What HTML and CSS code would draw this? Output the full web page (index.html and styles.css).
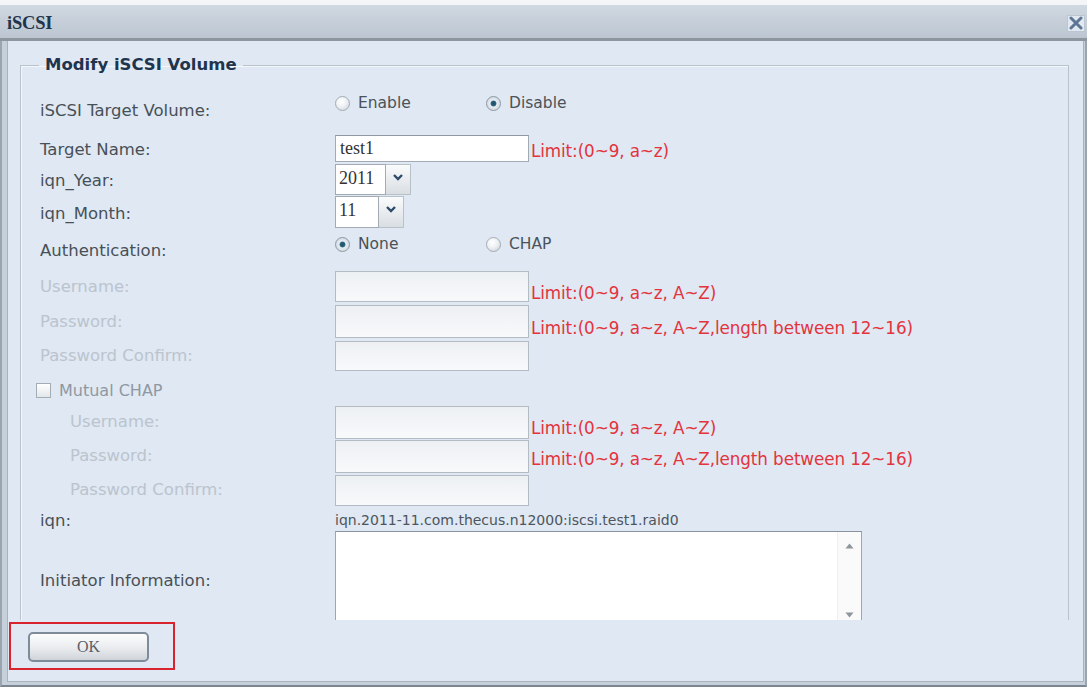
FILE: index.html
```html
<!DOCTYPE html>
<html>
<head>
<meta charset="utf-8">
<title>iSCSI</title>
<link rel="stylesheet" href="styles.css">
</head>
<body>
<div class="dialog">
  <div class="titlebar">
    <span class="title">iSCSI</span>
    <span class="close"><svg width="14" height="14" viewBox="0 0 14 14"><path d="M2 2 L12 12 M12 2 L2 12" stroke="#5d7695" stroke-width="3" stroke-linecap="round"/></svg></span>
  </div>
  <div class="panel">
    <div class="scroll">
      <fieldset class="group">
        <legend>Modify iSCSI Volume</legend>

        <div class="row r-a top">
          <span class="label low">iSCSI Target Volume:</span>
          <div class="radios">
            <span class="radio-item"><span class="radio"></span>Enable</span>
            <span class="radio-item"><span class="radio on"></span>Disable</span>
          </div>
        </div>

        <div class="row r-b">
          <span class="label down">Target Name:</span>
          <input class="field h27" type="text" value="test1">
          <span class="limit">Limit:(0~9, a~z)</span>
        </div>

        <div class="row r-c">
          <span class="label down">iqn_Year:</span>
          <div class="select s-year"><span class="sel-val">2011</span><span class="sel-btn"><svg width="12" height="8" viewBox="0 0 12 8"><path d="M2 2 L6 6 L10 2" fill="none" stroke="#2e4a6b" stroke-width="2.4"/></svg></span></div>
        </div>

        <div class="row r-d">
          <span class="label down">iqn_Month:</span>
          <div class="select s-month"><span class="sel-val">11</span><span class="sel-btn"><svg width="12" height="8" viewBox="0 0 12 8"><path d="M2 2 L6 6 L10 2" fill="none" stroke="#2e4a6b" stroke-width="2.4"/></svg></span></div>
        </div>

        <div class="row r-e top">
          <span class="label low">Authentication:</span>
          <div class="radios auth">
            <span class="radio-item"><span class="radio on"></span>None</span>
            <span class="radio-item"><span class="radio"></span>CHAP</span>
          </div>
        </div>

        <div class="row r-f">
          <span class="label off">Username:</span>
          <input class="field h31" type="text" disabled>
          <span class="limit low">Limit:(0~9, a~z, A~Z)</span>
        </div>

        <div class="row r-g">
          <span class="label off">Password:</span>
          <input class="field h33" type="password" disabled>
          <span class="limit low">Limit:(0~9, a~z, A~Z,length between 12~16)</span>
        </div>

        <div class="row r-h">
          <span class="label off">Password Confirm:</span>
          <input class="field h30" type="password" disabled>
        </div>

        <div class="row r-i">
          <span class="check-label"><span class="checkbox"></span>Mutual CHAP</span>
        </div>

        <div class="row r-j">
          <span class="label off sub">Username:</span>
          <input class="field h33" type="text" disabled>
          <span class="limit low">Limit:(0~9, a~z, A~Z)</span>
        </div>

        <div class="row r-k">
          <span class="label off sub">Password:</span>
          <input class="field h33" type="password" disabled>
          <span class="limit">Limit:(0~9, a~z, A~Z,length between 12~16)</span>
        </div>

        <div class="row r-l">
          <span class="label off sub">Password Confirm:</span>
          <input class="field h31" type="password" disabled>
        </div>

        <div class="row r-m">
          <span class="label down">iqn:</span>
          <span class="iqn">iqn.2011-11.com.thecus.n12000:iscsi.test1.raid0</span>
        </div>

        <div class="row r-n">
          <span class="label">Initiator Information:</span>
          <div class="textarea">
            <div class="ta-body"></div>
            <div class="ta-bar">
              <svg width="9" height="6" viewBox="0 0 9 6"><path d="M0.5 5.5 L4.5 0.5 L8.5 5.5 Z" fill="#8e959c"/></svg>
              <svg width="9" height="6" viewBox="0 0 9 6"><path d="M0.5 0.5 L4.5 5.5 L8.5 0.5 Z" fill="#8e959c"/></svg>
            </div>
          </div>
        </div>

        <div class="row r-o"></div>
      </fieldset>
    </div>
    <div class="footer">
      <div class="highlight">
        <button class="ok" type="button">OK</button>
      </div>
    </div>
  </div>
</div>
</body>
</html>
```

FILE: styles.css
```css
html, body {
  margin: 0;
  padding: 0;
}

body {
  background: #f3f5f7;
  font-family: "DejaVu Sans", Verdana, sans-serif;
  width: 1087px;
  height: 687px;
  overflow: hidden;
}

.dialog {
  margin-top: 5px;
  height: 682px;
  box-sizing: border-box;
  display: flex;
  flex-direction: column;
  background: #c6d0da;
  border-left: 2px solid #9ba5af;
  border-right: 2px solid #9ba5af;
  border-bottom: 2px solid #7c868f;
}

.titlebar {
  height: 33px;
  flex: none;
  display: flex;
  align-items: center;
  justify-content: space-between;
  padding: 0 0 0 7px;
  margin: 0 -2px;
  background: linear-gradient(#d0d8e1, #bcc6d1);
  border-bottom: 3px solid #8d969f;
}

.title {
  font-family: "Liberation Serif", "Times New Roman", serif;
  font-weight: bold;
  font-size: 18.5px;
  color: #22344b;
  letter-spacing: -0.2px;
  padding-top: 4px;
}

.close {
  width: 18px;
  height: 17px;
  margin-right: 2px;
  margin-top: 3px;
  display: flex;
  align-items: center;
  justify-content: center;
  background: #e2e8ef;
  border: 1px solid #bcc6d1;
  box-sizing: border-box;
}

.panel {
  flex: 1;
  margin: 0 1px 3px 5px;
  background: #dfe8f3;
  border: 1px solid #a8b2bc;
  border-top: none;
  display: flex;
  flex-direction: column;
}

.scroll {
  height: 579px;
  flex: none;
  overflow: hidden;
  padding: 15px 14px 0 12px;
  box-sizing: border-box;
}

.group {
  margin: 0;
  padding: 14px 10px 0 19px;
  border: 1px solid #b8c3ce;
  box-shadow: inset 1px 1px 0 #f4f7fa;
  min-width: 0;
}

.group legend {
  padding: 0 6px;
  margin-left: -1px;
  font-weight: bold;
  font-size: 16.5px;
  line-height: 18px;
  color: #1f344d;
}

.row {
  display: flex;
  align-items: center;
}

.row.top {
  align-items: flex-start;
}

.label {
  width: 295px;
  flex: none;
  font-size: 16.5px;
  line-height: 18px;
  color: #485057;
}

.label.low {
  padding-top: 14px;
}

.label.down {
  padding-top: 4px;
}

.label.off {
  color: #bbc4ce;
}

.label.sub {
  padding-left: 30px;
  width: 265px;
}

.r-a { height: 45px; }
.r-b { height: 30px; }
.r-c { height: 32px; }
.r-d { height: 33px; }
.r-e { height: 41px; }
.r-f { height: 35px; }
.r-g { height: 35px; }
.r-h { height: 34px; }
.r-i { height: 32px; }
.r-j { height: 34px; }
.r-k { height: 34px; }
.r-l { height: 34px; }
.r-m { height: 24px; }
.r-n { height: 100px; }
.r-o { height: 30px; }

.radios {
  display: flex;
  padding-top: 6px;
  font-size: 15.5px;
  line-height: 18px;
  color: #4b5259;
}

.radios.auth {
  padding-top: 7px;
}

.radio-item {
  width: 151px;
  display: flex;
  align-items: center;
  gap: 8px;
}

.radio {
  width: 15px;
  height: 15px;
  box-sizing: border-box;
  border-radius: 50%;
  border: 1px solid #a3abb3;
  background: radial-gradient(circle at 40% 35%, #ffffff 0%, #eef1f4 45%, #c9cfd5 100%);
  flex: none;
}

.radio.on {
  border-color: #8d99a5;
  background: radial-gradient(circle at 50% 50%, #1f4d63 0%, #2d6680 28%, #e8eef3 36%, #c4ccd4 100%);
}

.field {
  width: 194px;
  box-sizing: border-box;
  margin: 0;
  padding: 0 4px;
  border: 1px solid #a2abb4;
  border-top-color: #8f98a1;
  background: #ffffff;
  font-family: "Liberation Serif", "Times New Roman", serif;
  font-size: 18px;
  color: #333;
  outline: none;
  flex: none;
}

.field:disabled {
  background: linear-gradient(#edf0f3, #f8f9fb);
  border-color: #b3bbc3;
}

.h27 { height: 27px; }
.h30 { height: 30px; }
.h31 { height: 31px; }
.h33 { height: 33px; }

.limit {
  color: #e3343c;
  font-size: 16.8px;
  letter-spacing: -0.1px;
  margin-left: 2px;
  padding-top: 6px;
  white-space: nowrap;
}

.limit.low {
  padding-top: 12px;
}

.select {
  display: flex;
  flex: none;
}

.sel-val {
  box-sizing: border-box;
  border: 1px solid #a2abb4;
  background: #fff;
  font-family: "Liberation Serif", "Times New Roman", serif;
  font-size: 18px;
  color: #333;
  padding: 3px 0 0 3px;
}

.sel-btn {
  box-sizing: border-box;
  width: 25px;
  border: 1px solid #b8c0c8;
  border-left: none;
  background: linear-gradient(#fafbfc, #d9dee3);
  display: flex;
  justify-content: center;
  padding-top: 8px;
}

.s-year .sel-val { width: 51px; height: 31px; }
.s-year .sel-btn { height: 31px; }
.s-month .sel-val { width: 44px; height: 32px; }
.s-month .sel-btn { height: 32px; }

.check-label {
  display: flex;
  align-items: center;
  gap: 8px;
  margin-left: -4px;
  padding-top: 3px;
  font-size: 16px;
  color: #8f98a2;
}

.checkbox {
  width: 15px;
  height: 15px;
  box-sizing: border-box;
  border: 1px solid #a4acb4;
  background: linear-gradient(#ffffff, #e3e7eb);
}

.iqn {
  font-size: 14px;
  color: #4e555c;
  padding-top: 1px;
}

.textarea {
  width: 527px;
  height: 100px;
  box-sizing: border-box;
  border: 1px solid #9ea7b0;
  border-top-color: #8a939c;
  background: #fff;
  display: flex;
  flex: none;
}

.ta-body {
  flex: 1;
}

.ta-bar {
  width: 24px;
  border-left: 1px solid #edf0f2;
  background: #fafafa;
  display: flex;
  flex-direction: column;
  align-items: center;
  justify-content: space-between;
  padding: 11px 0 12px;
  box-sizing: border-box;
}

.footer {
  flex: 1;
  padding: 2px 0 0 1px;
}

.highlight {
  width: 166px;
  height: 48px;
  box-sizing: border-box;
  border: 2px solid #d8242f;
  padding: 8px 0 0 17px;
}

.ok {
  width: 121px;
  height: 30px;
  margin: 0;
  border: 2px solid #7e8c9a;
  border-radius: 5px;
  background: linear-gradient(#fdfdfd, #e9ebee 55%, #cfd4da);
  font-family: "Liberation Serif", "Times New Roman", serif;
  font-size: 16px;
  color: #5c6166;
  padding: 0;
}
```
